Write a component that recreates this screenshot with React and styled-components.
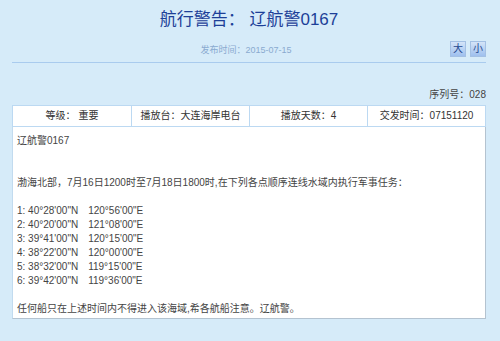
import React from "react";
import styled, { createGlobalStyle } from "styled-components";

const Global = createGlobalStyle`
  html, body { margin: 0; padding: 0; background: #d6ebf9; }
  body { font-family: "Liberation Sans", Arial, "Noto Sans CJK SC", sans-serif; }
`;

const Page = styled.div`
  width: 500px;
  height: 341px;
  box-sizing: border-box;
  padding: 8px 14px 0 12px;
  background: #d6ebf9;
  font-family: "Liberation Sans", Arial, "Noto Sans CJK SC", sans-serif;
`;

const Title = styled.h1`
  margin: 0;
  height: 24px;
  line-height: 24px;
  text-align: center;
  font-size: 17px;
  font-weight: normal;
  color: #1d3f98;
  letter-spacing: 0;
`;

const MetaRow = styled.div`
  margin-top: 8px;
  height: 18px;
  display: grid;
  grid-template-columns: 1fr auto 1fr;
  align-items: center;
  padding-bottom: 4px;
  border-bottom: 1px solid #a9cbee;
`;

const PubDate = styled.div`
  grid-column: 2;
  font-size: 9px;
  color: #8aaad0;
  transform: translateX(-3px);
`;

const SizeButtons = styled.div`
  grid-column: 3;
  justify-self: end;
  display: flex;
  gap: 4px;
`;

const SizeButton = styled.button`
  width: 16px;
  height: 16px;
  padding: 0;
  border: 1px solid #a3c0e4;
  background: linear-gradient(#d4e4f8, #9fc0ee);
  color: #25478f;
  font-size: 10px;
  line-height: 14px;
  font-family: inherit;
  cursor: pointer;
`;

const Serial = styled.div`
  margin-top: 25px;
  text-align: right;
  font-size: 10px;
  line-height: 14px;
  color: #444;
`;

const InfoTable = styled.div`
  margin-top: 3px;
  display: grid;
  grid-template-columns: repeat(4, 1fr);
  border: 1px solid #bcd9f2;
  background: #fff;
`;

const InfoCell = styled.div`
  height: 20px;
  line-height: 20px;
  text-align: center;
  font-size: 10px;
  color: #333;
  border-left: ${(p) => (p.$first ? "none" : "1px solid #bcd9f2")};
`;

const Body = styled.div`
  background: #fff;
  border-left: 1px solid #c2dbef;
  border-right: 1px solid #b4c3d0;
  border-bottom: 1px solid #b4c3d0;
  padding: 7px 4px 2px 4px;
  font-size: 10px;
  line-height: 14px;
  color: #444;
`;

const Line = styled.div`
  height: 14px;
  white-space: nowrap;
`;

const Lat = styled.span`
  display: inline-block;
  margin-right: 10px;
`;

const coords = [
  ["1: 40°28'00\"N", "120°56'00\"E"],
  ["2: 40°20'00\"N", "121°08'00\"E"],
  ["3: 39°41'00\"N", "120°15'00\"E"],
  ["4: 38°22'00\"N", "120°00'00\"E"],
  ["5: 38°32'00\"N", "119°15'00\"E"],
  ["6: 39°42'00\"N", "119°36'00\"E"],
];

const info = ["等级： 重要", "播放台：大连海岸电台", "播放天数：4", "交发时间：07151120"];

export default function App() {
  return (
    <>
      <Global />
      <Page>
        <Title>航行警告： 辽航警0167</Title>
        <MetaRow>
          <PubDate>发布时间：2015-07-15</PubDate>
          <SizeButtons>
            <SizeButton>大</SizeButton>
            <SizeButton>小</SizeButton>
          </SizeButtons>
        </MetaRow>
        <Serial>序列号：028</Serial>
        <InfoTable>
          {info.map((t, i) => (
            <InfoCell key={i} $first={i === 0}>
              {t}
            </InfoCell>
          ))}
        </InfoTable>
        <Body>
          <Line>辽航警0167</Line>
          <Line />
          <Line />
          <Line>渤海北部，7月16日1200时至7月18日1800时,在下列各点顺序连线水域内执行军事任务：</Line>
          <Line />
          {coords.map(([a, b]) => (
            <Line key={a}>
              <Lat>{a}</Lat>
              {b}
            </Line>
          ))}
          <Line />
          <Line>任何船只在上述时间内不得进入该海域,希各航船注意。辽航警。</Line>
        </Body>
      </Page>
    </>
  );
}
